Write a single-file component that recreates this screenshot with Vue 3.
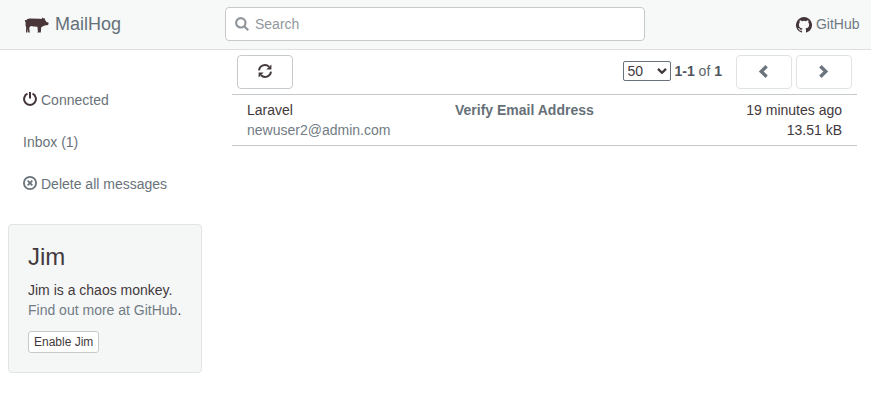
<script setup>
import { ref } from 'vue'

const pageSize = ref(50)
const messages = [
  { from: 'Laravel', to: 'newuser2@admin.com', subject: 'Verify Email Address', age: '19 minutes ago', size: '13.51 kB' },
]
</script>

<template>
  <div class="page">
    <header class="navbar">
      <a class="brand">
        <svg class="pig" viewBox="0 0 25 16"><path d="M.9 2.9 2.2 3.3C3 2.1 4 1.6 5.6 1.5L15.6 1.7 17.4 2 18.6.4 19.7 1.5 20.4.9 21.2 3 22.3 4.7 24.7 5.7 24.1 7.9 20.6 8.6 18.6 9.4 17.2 10.2 16.8 15.6H13.4L13.9 14.4 13.4 9.8 9.8 9.4 6.9 9 5.2 10.7 5.8 15.6H4.2L3.8 12 3.3 15.6H1.9L2.2 10.4 1.5 8.2 1.6 5 .9 4.4Z" /></svg>
        <span>MailHog</span>
      </a>
      <label class="search">
        <svg viewBox="0 0 14 14"><circle cx="5.8" cy="5.8" r="4.7" /><path d="m9.2 9.2 4 4" /></svg>
        <input type="text" placeholder="Search">
      </label>
      <a class="github">
        <svg viewBox="0 0 16 16"><path d="M8 0a8 8 0 0 0-2.53 15.59c.4.07.55-.17.55-.38l-.01-1.49c-2.01.37-2.53-.49-2.69-.94-.09-.23-.48-.94-.82-1.13-.28-.15-.68-.52-.01-.53.63-.01 1.08.58 1.23.82.72 1.21 1.87.87 2.33.66.07-.52.28-.87.51-1.07-1.78-.2-3.64-.89-3.64-3.95 0-.87.31-1.59.82-2.15-.08-.2-.36-1.02.08-2.12 0 0 .67-.21 2.2.82a7.4 7.4 0 0 1 4 0c1.53-1.04 2.2-.82 2.2-.82.44 1.1.16 1.92.08 2.12.51.56.82 1.27.82 2.15 0 3.07-1.87 3.75-3.65 3.95.29.25.54.73.54 1.48l-.01 2.2c0 .21.15.46.55.38A8 8 0 0 0 8 0Z" /></svg>
        <span>GitHub</span>
      </a>
    </header>

    <div class="content">
      <aside>
        <ul class="nav">
          <li><svg class="power" viewBox="0 0 14 14"><path d="M4.5 1.7a5.9 5.9 0 1 0 5 0M7 0v6.6" /></svg>Connected</li>
          <li>Inbox ({{ messages.length }})</li>
          <li><svg class="remove" viewBox="0 0 14 14"><circle cx="7" cy="7" r="6.1" /><path d="m4.7 4.7 4.6 4.6m0-4.6L4.7 9.3" /></svg>Delete all messages</li>
        </ul>
        <section class="jim">
          <h3>Jim</h3>
          <p>Jim is a chaos monkey.<br><a>Find out more at GitHub</a>.</p>
          <button>Enable Jim</button>
        </section>
      </aside>

      <main>
        <div class="toolbar">
          <button class="btn" aria-label="Refresh">
            <svg class="refresh" viewBox="0 0 14 14"><path class="arc" d="M1 6.4A5.9 5.9 0 0 1 11 2.8M13 7.6A5.9 5.9 0 0 1 3 11.2" /><path class="tip" d="M13.4.4v5H8.4ZM.6 13.6v-5h5Z" /></svg>
          </button>
          <div class="pager">
            <span class="select">
              <select v-model="pageSize"><option :value="50">50</option><option :value="100">100</option><option :value="250">250</option></select>
              <svg viewBox="0 0 10 6"><path d="m1 .9 4 3.9 4-3.9" /></svg>
            </span>
            <span class="range"><b>1-{{ messages.length }}</b> of <b>{{ messages.length }}</b></span>
            <button class="btn faded" aria-label="Previous"><svg class="chevron" viewBox="0 0 10 12"><path d="M7.9 1.2 2.9 6l5 4.8" /></svg></button>
            <button class="btn faded" aria-label="Next"><svg class="chevron" viewBox="0 0 10 12"><path d="M2.1 1.2 7.1 6l-5 4.8" /></svg></button>
          </div>
        </div>
        <div class="messages">
          <div v-for="m in messages" :key="m.subject" class="row">
            <div>{{ m.from }}<br><span class="muted">{{ m.to }}</span></div>
            <div class="subject">{{ m.subject }}</div>
            <div class="meta">{{ m.age }}<br>{{ m.size }}</div>
          </div>
        </div>
      </main>
    </div>
  </div>
</template>

<style>
body { margin: 0; background: #fff; }
</style>

<style scoped>
* { box-sizing: border-box; }
.page { min-height: 411px; font: 14px/20px "Liberation Sans", Arial, sans-serif; color: #43393d; }
svg { display: block; flex: none; fill: none; stroke: currentColor; }
button, input, select { font-family: inherit; color: inherit; }
.navbar { display: grid; grid-template-columns: 201px 420px 1fr; height: 50px; padding: 0 12px 0 24px; background: #f7f9f9; border-bottom: 1px solid #dedfe0; }
.brand { display: flex; gap: 6px; align-items: center; height: 48px; font-size: 18px; color: #667078; }
.pig { width: 25px; height: 16px; margin-top: 2px; fill: #493638; stroke: none; }
.search { display: flex; align-items: center; gap: 6px; height: 34px; margin-top: 7px; padding: 0 9px; background: #fff; border: 1px solid #c7cacc; border-radius: 4px; color: #90969b; }
.search svg { width: 14px; height: 14px; stroke-width: 2.2; }
.search input { flex: 1; min-width: 0; padding: 0; border: 0; outline: 0; background: none; font-size: 14px; line-height: 20px; }
.search input::placeholder { color: #91979c; opacity: 1; }
.github { display: flex; justify-content: flex-end; align-items: center; gap: 4px; height: 48px; margin-right: -.5px; color: #707981; }
.github svg { width: 16px; height: 16px; margin-top: 2px; fill: #43353a; stroke: none; }
.content { display: grid; grid-template-columns: 194px 625px; column-gap: 30px; padding-left: 8px; }
.nav { list-style: none; margin: 30px 0 0; padding: 0; }
.nav li { display: flex; align-items: center; gap: 4px; height: 40px; margin-bottom: 2px; padding-left: 15px; color: #69727a; }
.nav svg { width: 14px; height: 14px; margin-top: -2px; }
.power { color: #43353a; stroke-width: 2; }
.remove { stroke-width: 1.8; }
.jim { height: 149px; margin-top: 20px; padding: 19px; background: #f5f7f7; border: 1px solid #e1e4e5; border-radius: 4px; }
.jim h3 { margin: 0 0 10px; font-size: 24px; line-height: 26px; font-weight: 400; }
.jim p { margin: 0 0 11px; white-space: nowrap; }
.jim a, .muted { color: #727c84; }
.jim button { display: block; height: 22px; padding: 0 5px; border: 1px solid #c7cacc; border-radius: 3px; background: #fff; font-size: 12px; line-height: 18px; }
.toolbar { display: flex; justify-content: space-between; padding: 5px 5px; }
.btn { display: flex; justify-content: center; align-items: center; width: 56px; height: 34px; padding: 0; background: #fff; border: 1px solid #c7cacc; border-radius: 4px; }
.faded { border-color: #e0e3e4; color: #6b747c; }
.refresh { width: 14px; height: 14px; margin-top: -2px; }
.arc { stroke-width: 1.9; }
.tip { fill: currentColor; stroke: none; }
.chevron { width: 11px; height: 13px; margin: -1px 2px 0 0; stroke-width: 3.1; }
.pager { display: flex; align-items: center; gap: 4px; }
.select { display: grid; align-items: center; margin-top: -2px; }
.select > * { grid-area: 1 / 1; }
.select select { appearance: none; width: 48px; height: 20px; padding: 0 4px; background: #fff; border: 1px solid #69727a; border-radius: 2px; font-size: 14px; line-height: 18px; }
.select svg { justify-self: end; width: 10px; height: 6px; margin-right: 4px; stroke-width: 2.3; pointer-events: none; }
.range { margin: -2px 10px 0 0; color: #5e656c; }
.range b { color: #50545a; }
.messages { border-top: 1px solid #c6c9cb; }
.row { display: grid; grid-template-columns: 208px 1fr auto; padding: 5px 15px; border-bottom: 1px solid #c6c9cb; }
.subject { font-weight: 700; color: #667078; }
.meta { text-align: right; }
</style>
